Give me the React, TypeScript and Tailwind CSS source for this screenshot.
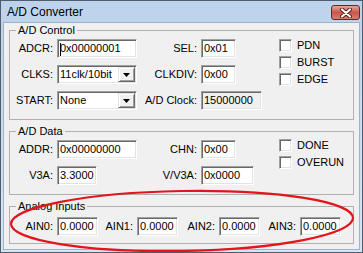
import React from "react";

const sunken =
  "border border-t-[#a0a0a0] border-l-[#a0a0a0] border-r-white border-b-white shadow-[inset_1px_1px_0_#696969,inset_-1px_-1px_0_#e3e3e3]";

function Field({ w, value, disabled, caret }: { w: string; value: string; disabled?: boolean; caret?: boolean }) {
  return (
    <div
      className={`${w} h-[19px] ${sunken} ${disabled ? "bg-[#f0f0f0]" : "bg-white"} pl-[2px] leading-[17px] whitespace-nowrap overflow-hidden`}
    >
      <span className="relative">
        {caret && <span className="absolute left-0 top-[1px] w-px h-[13px] bg-black" />}
        {value}
      </span>
    </div>
  );
}

function Combo({ value }: { value: string }) {
  return (
    <div className={`w-[80px] h-[19px] ${sunken} bg-white p-[1px] flex`}>
      <div className="flex-1 pl-[1px] leading-[15px] whitespace-nowrap">{value}</div>
      <div className="w-[17px] h-[15px] bg-[#f0f0f0] border border-t-[#e3e3e3] border-l-[#e3e3e3] border-r-[#696969] border-b-[#696969] shadow-[inset_1px_1px_0_#fff,inset_-1px_-1px_0_#a0a0a0] flex items-center justify-center">
        <svg width="7" height="4" viewBox="0 0 7 4">
          <path d="M0 0H7L3.5 4Z" fill="#000" />
        </svg>
      </div>
    </div>
  );
}

function Check({ label }: { label: string }) {
  return (
    <div className="flex items-center h-[13px] gap-[5px]">
      <div className={`w-[13px] h-[13px] bg-white ${sunken}`} />
      <span className="leading-[13px]">{label}</span>
    </div>
  );
}

function Label({ children }: { children: React.ReactNode }) {
  return <div className="text-right pr-[4px] leading-[19px] whitespace-nowrap">{children}</div>;
}

function Group({ title, className, children }: { title: string; className: string; children: React.ReactNode }) {
  return (
    <fieldset className={`border border-[#b0b0b0] ${className}`}>
      <legend className="ml-[6px] px-[2px] leading-[13px]">{title}</legend>
      {children}
    </fieldset>
  );
}

export default function App() {
  return (
    <div className="relative w-[363px] h-[253px] overflow-hidden border border-[#4f5d6e] bg-gradient-to-b from-[#bdd3eb] to-[#d5e4f4] flex flex-col font-['Liberation_Sans',Arial,sans-serif] text-[11px] text-black">
      <div className="h-[21px] flex items-start justify-between pl-[6px] pr-[2px]">
        <div className="text-[12px] leading-[21px] pt-[1px]">A/D Converter</div>
        <div className="mt-[4px] w-[29px] h-[15px] rounded-[3px] border border-[#5d2a24] bg-gradient-to-b from-[#e6a79a] via-[#c8564b] to-[#d77d6f] flex items-center justify-center">
          <svg width="12" height="10" viewBox="0 0 12 10">
            <path d="M2 1.5L10 8.5M10 1.5L2 8.5" stroke="#4b1d17" strokeWidth="4" strokeLinecap="round" />
            <path d="M2 1.5L10 8.5M10 1.5L2 8.5" stroke="#fff" strokeWidth="2.2" strokeLinecap="round" />
          </svg>
        </div>
      </div>

      <div className="flex-1 mx-[2px] mb-[2px] bg-[#f0f0f0] border border-[#9fb2c9] px-[5px]">
        <Group title="A/D Control" className="mt-[1px] pt-[2px] pb-[9px]">
          <div className="flex">
            <div className="grid grid-cols-[47px_80px_64px_78px] gap-y-[7px] items-center">
              <Label>ADCR:</Label>
              <Field w="w-[80px]" value="0x00000001" caret />
              <Label>SEL:</Label>
              <Field w="w-[35px]" value="0x01" />
              <Label>CLKS:</Label>
              <Combo value="11clk/10bit" />
              <Label>CLKDIV:</Label>
              <Field w="w-[35px]" value="0x00" />
              <Label>START:</Label>
              <Combo value="None" />
              <Label>A/D Clock:</Label>
              <Field w="w-[61px]" value="15000000" disabled />
            </div>
            <div className="flex flex-col gap-[4px]">
              <Check label="PDN" />
              <Check label="BURST" />
              <Check label="EDGE" />
            </div>
          </div>
        </Group>

        <Group title="A/D Data" className="mt-[5px] pt-[2px] pb-[9px]">
          <div className="flex">
            <div className="grid grid-cols-[47px_80px_64px_78px] gap-y-[7px] items-center">
              <Label>ADDR:</Label>
              <Field w="w-[80px]" value="0x00000000" />
              <Label>CHN:</Label>
              <Field w="w-[35px]" value="0x00" />
              <Label>V3A:</Label>
              <Field w="w-[40px]" value="3.3000" />
              <Label>V/V3A:</Label>
              <Field w="w-[53px]" value="0x0000" />
            </div>
            <div className="flex flex-col gap-[4px] -mt-[1px]">
              <Check label="DONE" />
              <Check label="OVERUN" />
            </div>
          </div>
        </Group>

        <Group title="Analog Inputs" className="mt-[5px] pt-[4px] pb-[7px]">
          <div className="grid grid-cols-[47px_41px_39px_41px_41px_41px_40px_41px] items-center">
            <Label>AIN0:</Label>
            <Field w="w-[41px]" value="0.0000" />
            <Label>AIN1:</Label>
            <Field w="w-[41px]" value="0.0000" />
            <Label>AIN2:</Label>
            <Field w="w-[41px]" value="0.0000" />
            <Label>AIN3:</Label>
            <Field w="w-[41px]" value="0.0000" />
          </div>
        </Group>
      </div>

      <svg className="absolute left-0 top-0 pointer-events-none" width="363" height="253" viewBox="0 0 363 253">
        <ellipse cx="181" cy="220" rx="171" ry="30" transform="rotate(-1 181 220)" fill="none" stroke="#e3141c" strokeWidth="2.2" />
      </svg>
    </div>
  );
}
